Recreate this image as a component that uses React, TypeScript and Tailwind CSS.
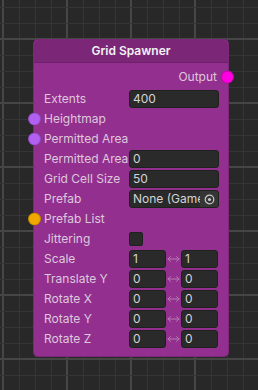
import React from "react";

const MINOR = "#353535";
const MAJOR = "#464646";

function Grid() {
  const lines: React.ReactNode[] = [];
  for (let x = 3; x < 258; x += 16) {
    const major = (x - 3) % 64 === 0;
    lines.push(
      <rect key={"v" + x} x={major ? x - 1 : x} y={0} width={major ? 2 : 1} height={390} fill={major ? MAJOR : MINOR} />
    );
  }
  for (let y = 7; y < 390; y += 16) {
    const major = (y - 39) % 64 === 0;
    lines.push(
      <rect key={"h" + y} x={0} y={major ? y - 1 : y} width={258} height={major ? 2 : 1} fill={major ? MAJOR : MINOR} />
    );
  }
  return (
    <svg className="absolute inset-0" width={258} height={390} viewBox="0 0 258 390">
      {lines}
    </svg>
  );
}

function Pin({ color, side }: { color: string; side: "left" | "right" }) {
  return (
    <span
      className={
        "absolute top-1/2 -translate-y-1/2 w-[13px] h-[13px] rounded-full border border-black/20 " +
        (side === "left" ? "left-[-6px]" : "right-[-6px]")
      }
      style={{ backgroundColor: color }}
    />
  );
}

function Label({ children }: { children: React.ReactNode }) {
  return <span className="w-[85px] shrink-0 whitespace-nowrap text-[12px] text-[#ddc8db]">{children}</span>;
}

function Box({ value, w }: { value: string; w: string }) {
  return (
    <div className={w + " h-[18px] rounded-[3px] bg-[#2a2a2a] border border-[#202020] flex items-center pl-[3px] text-[12px] text-[#d4d4d4] overflow-hidden whitespace-nowrap"}>
      {value}
    </div>
  );
}

function Row({ children, pin }: { children: React.ReactNode; pin?: string }) {
  return (
    <div className="relative h-[20px] flex items-center pl-[10px] pr-[9px]">
      {pin && <Pin color={pin} side="left" />}
      {children}
    </div>
  );
}

function Arrow() {
  return (
    <span className="w-[15px] flex items-center justify-center">
      <svg width="13" height="8" viewBox="0 0 13 8">
        <path d="M1 4H12M3.5 1.5L1 4L3.5 6.5M9.5 1.5L12 4L9.5 6.5" fill="none" stroke="#b57ab2" strokeWidth="1" strokeLinecap="round" strokeLinejoin="round" />
      </svg>
    </span>
  );
}

function VecRow({ label, a, b }: { label: string; a: string; b: string }) {
  return (
    <Row>
      <Label>{label}</Label>
      <Box value={a} w="w-[37px]" />
      <Arrow />
      <Box value={b} w="w-[37px]" />
    </Row>
  );
}

export default function App() {
  return (
    <div className="relative w-[258px] h-[390px] bg-[#282828] overflow-hidden font-['Inter',sans-serif]">
      <Grid />
      <div className="relative pl-[33px] pt-[39px]">
        <div className="relative w-[196px] h-[318px] rounded-[5px] bg-[#93308f] border border-[#6c2169]/60 flex flex-col">
          <div className="h-[23px] shrink-0 rounded-t-[5px] bg-[#7b2677] border-b border-[#6a2066]/70 flex items-center justify-center text-[12px] font-semibold text-[#f2f2f2]">
            Grid Spawner
          </div>
          <div className="pt-[4px] flex flex-col">
            <div className="relative h-[20px] flex items-center justify-end pr-[11px]">
              <span className="text-[12px] text-[#ddc8db]">Output</span>
              <Pin color="#ff00e0" side="right" />
            </div>
            <div className="mt-[2px]" />
            <Row>
              <Label>Extents</Label>
              <Box value="400" w="w-[90px]" />
            </Row>
            <Row pin="#b160f2">
              <Label>Heightmap</Label>
            </Row>
            <Row pin="#b160f2">
              <Label>Permitted Area</Label>
            </Row>
            <Row>
              <Label>Permitted Area</Label>
              <Box value="0" w="w-[90px]" />
            </Row>
            <Row>
              <Label>Grid Cell Size</Label>
              <Box value="50" w="w-[90px]" />
            </Row>
            <Row>
              <Label>Prefab</Label>
              <div className="w-[90px] h-[18px] rounded-[3px] bg-[#2a2a2a] border border-[#202020] flex items-center overflow-hidden">
                <span className="flex-1 pl-[3px] text-[12px] text-[#d4d4d4] whitespace-nowrap overflow-hidden">None (GameObject)</span>
                <span className="w-[18px] h-full bg-[#353535] flex items-center justify-center shrink-0">
                  <svg width="11" height="11" viewBox="0 0 11 11">
                    <circle cx="5.5" cy="5.5" r="4.3" fill="none" stroke="#c8c8c8" strokeWidth="1.2" />
                    <circle cx="5.5" cy="5.5" r="1.6" fill="#c8c8c8" />
                  </svg>
                </span>
              </div>
            </Row>
            <Row pin="#f0a800">
              <Label>Prefab List</Label>
            </Row>
            <Row>
              <Label>Jittering</Label>
              <div className="w-[14px] h-[14px] rounded-[2px] bg-[#2a2a2a] border border-[#202020]" />
            </Row>
            <VecRow label="Scale" a="1" b="1" />
            <VecRow label="Translate Y" a="0" b="0" />
            <VecRow label="Rotate X" a="0" b="0" />
            <VecRow label="Rotate Y" a="0" b="0" />
            <VecRow label="Rotate Z" a="0" b="0" />
          </div>
        </div>
      </div>
    </div>
  );
}
